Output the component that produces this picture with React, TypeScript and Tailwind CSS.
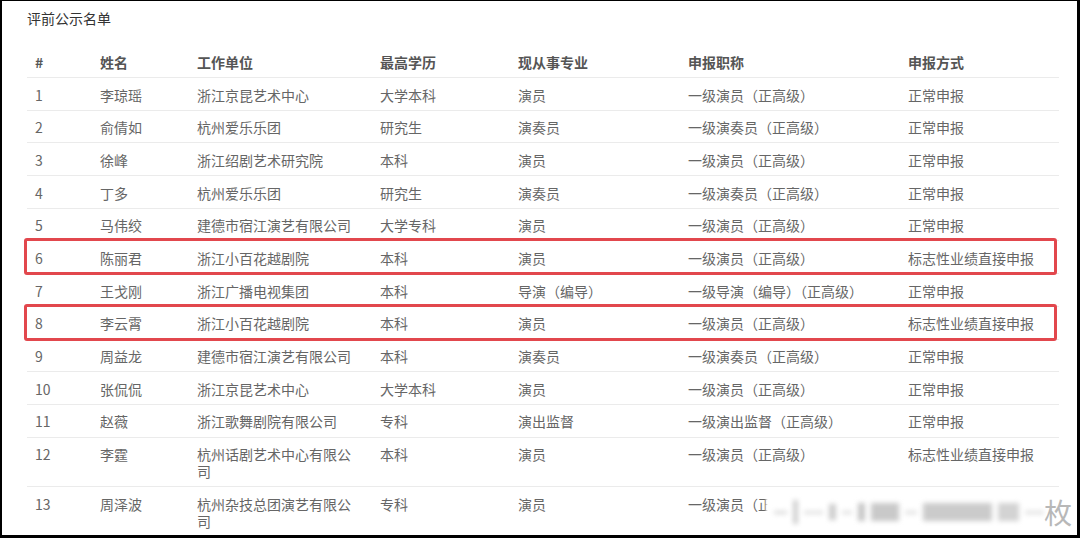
import React from "react";

const rows: { n: string; name: string; unit: string; edu: string; major: string; title: string; way: string }[] = [
  { n: "1", name: "李琼瑶", unit: "浙江京昆艺术中心", edu: "大学本科", major: "演员", title: "一级演员（正高级）", way: "正常申报" },
  { n: "2", name: "俞倩如", unit: "杭州爱乐乐团", edu: "研究生", major: "演奏员", title: "一级演奏员（正高级）", way: "正常申报" },
  { n: "3", name: "徐峰", unit: "浙江绍剧艺术研究院", edu: "本科", major: "演员", title: "一级演员（正高级）", way: "正常申报" },
  { n: "4", name: "丁多", unit: "杭州爱乐乐团", edu: "研究生", major: "演奏员", title: "一级演奏员（正高级）", way: "正常申报" },
  { n: "5", name: "马伟绞", unit: "建德市宿江演艺有限公司", edu: "大学专科", major: "演员", title: "一级演员（正高级）", way: "正常申报" },
  { n: "6", name: "陈丽君", unit: "浙江小百花越剧院", edu: "本科", major: "演员", title: "一级演员（正高级）", way: "标志性业绩直接申报" },
  { n: "7", name: "王戈刚", unit: "浙江广播电视集团", edu: "本科", major: "导演（编导）", title: "一级导演（编导）（正高级）", way: "正常申报" },
  { n: "8", name: "李云霄", unit: "浙江小百花越剧院", edu: "本科", major: "演员", title: "一级演员（正高级）", way: "标志性业绩直接申报" },
  { n: "9", name: "周益龙", unit: "建德市宿江演艺有限公司", edu: "本科", major: "演奏员", title: "一级演奏员（正高级）", way: "正常申报" },
  { n: "10", name: "张侃侃", unit: "浙江京昆艺术中心", edu: "大学本科", major: "演员", title: "一级演员（正高级）", way: "正常申报" },
  { n: "11", name: "赵薇", unit: "浙江歌舞剧院有限公司", edu: "专科", major: "演出监督", title: "一级演出监督（正高级）", way: "正常申报" },
  { n: "12", name: "李霆", unit: "杭州话剧艺术中心有限公司", edu: "本科", major: "演员", title: "一级演员（正高级）", way: "标志性业绩直接申报" },
  { n: "13", name: "周泽波", unit: "杭州杂技总团演艺有限公司", edu: "专科", major: "演员", title: "一级演员（正高级）", way: "正常申报" },
];

const grid = "grid grid-cols-[65px_97px_183px_138px_170px_220px_159px]";

function Row({ r, boxed }: { r: (typeof rows)[number]; boxed: boolean }) {
  return (
    <div className={`relative ${grid} border-b border-[#ebebeb] text-[#666]`}>
      {[r.n, r.name, r.unit, r.edu, r.major, r.title, r.way].map((c, i) => (
        <div key={i} className="px-[8px] pt-[8.5px] pb-[6.2px] leading-[17px]">{c}</div>
      ))}
      {boxed && (
        <div className="pointer-events-none absolute -left-[3px] -top-[3px] -bottom-[2px] right-[2px] rounded-[3px] border-[3px] border-[#e2474d]" />
      )}
    </div>
  );
}

export default function App() {
  return (
    <div
      lang="zh-CN"
      className="relative w-[1080px] h-[538px] overflow-hidden bg-white border-l-2 border-t border-r-[3px] border-b-[3px] border-black"
      style={{ fontFamily: '"Noto Sans CJK SC", sans-serif' }}
    >
      <div className="pl-[25px] pt-[7px] text-[14px] leading-[20px] text-[#333]">评前公示名单</div>
      <div className="ml-[25px] mt-[17px] w-[1032px] text-[14px]">
        <div className={`${grid} h-[33px] items-center border-b border-[#ebebeb] font-semibold text-[#555]`}>
          {["#", "姓名", "工作单位", "最高学历", "现从事专业", "申报职称", "申报方式"].map((h) => (
            <div key={h} className="px-[8px] pt-[2px]">{h}</div>
          ))}
        </div>
        {rows.map((r) => (
          <Row key={r.n} r={r} boxed={r.n === "6" || r.n === "8"} />
        ))}
      </div>

      {/* watermark overlay */}
      <div className="absolute left-[764px] top-[493px] flex h-[36px] items-center">
        <div className="relative h-full w-[278px]">
          <div className="absolute inset-0 bg-white blur-[1px]" />
          <div className="relative flex h-full items-center gap-[6px] pl-[8px] blur-[2.5px]">
            <div className="h-[3px] w-[14px] bg-[#d6d6d6]" />
            <div className="h-[24px] w-[5px] bg-[#cfcfcf]" />
            <div className="h-[3px] w-[20px] bg-[#dcdcdc]" />
            <div className="h-[16px] w-[8px] bg-[#cdcdcd]" />
            <div className="h-[3px] w-[10px] bg-[#dcdcdc]" />
            <div className="h-[18px] w-[8px] bg-[#c6c6c6]" />
            <div className="h-[18px] w-[30px] bg-[#c9c9c9]" />
            <div className="h-[3px] w-[12px] bg-[#dcdcdc]" />
            <div className="h-[18px] w-[74px] bg-[#cbcbcb]" />
            <div className="h-[18px] w-[22px] bg-[#d3d3d3]" />
            <div className="h-[3px] w-[20px] bg-[#dcdcdc]" />
          </div>
        </div>
        <div className="text-[28px] leading-[34px] text-[#b8b8b8]">枚</div>
      </div>
    </div>
  );
}
